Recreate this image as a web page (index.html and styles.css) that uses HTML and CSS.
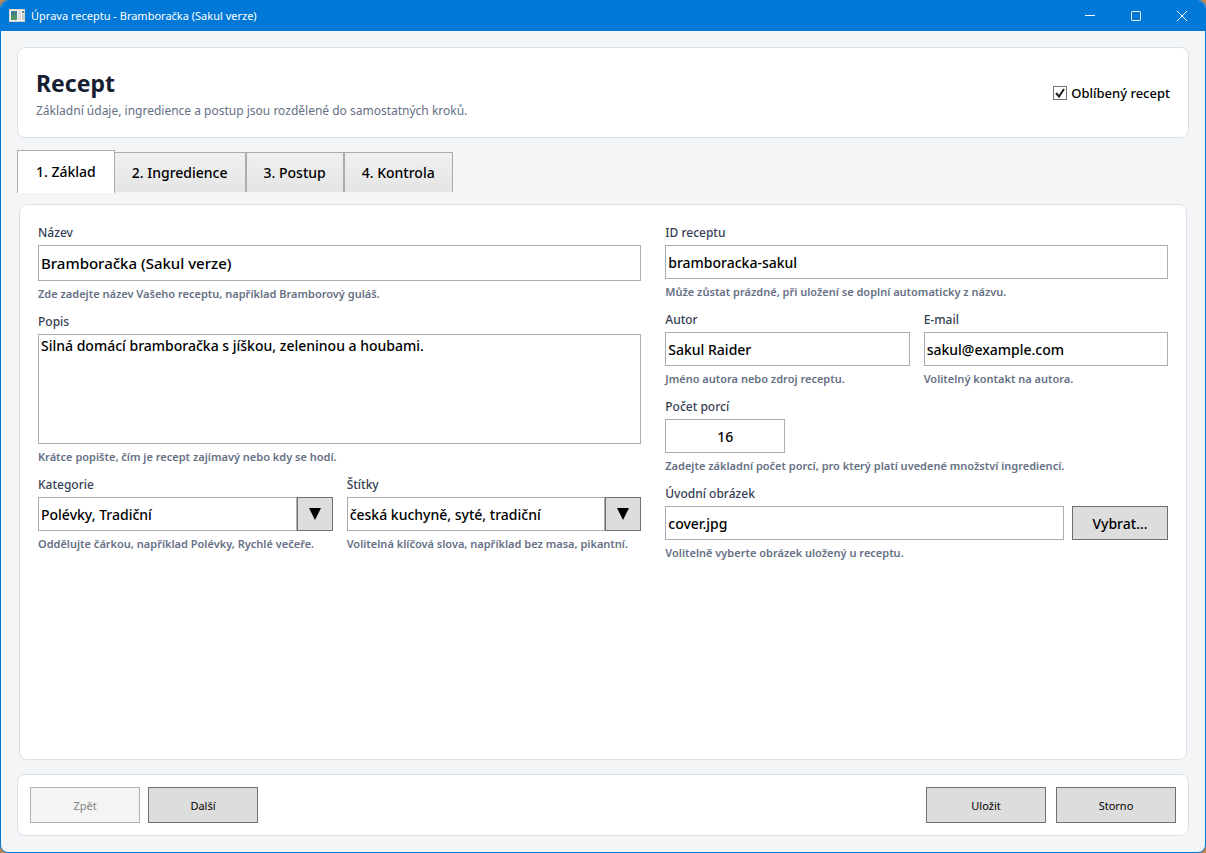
FILE: index.html
```html
<!DOCTYPE html>
<html lang="cs">
<head>
    <meta charset="UTF-8">
    <meta name="viewport" content="width=device-width, initial-scale=1.0">
    <title>Úprava receptu - Bramboračka (Sakul verze)</title>
    <link rel="stylesheet" href="styles.css">
</head>
<body>
    <div class="window">
        <header class="titlebar">
            <svg class="app-icon" width="16" height="14" viewBox="0 0 16 14">
                <rect x="0.5" y="0.5" width="15" height="12" fill="#f4f4f4" stroke="#d6d2cc"/>
                <rect x="2" y="2" width="6" height="9" fill="#3d7f8c"/>
                <rect x="2" y="6" width="6" height="5" fill="#4a9468"/>
                <rect x="9" y="2" width="3" height="9" fill="#dcdcdc"/>
                <rect x="13" y="2" width="2" height="2" fill="#777"/>
                <rect x="13" y="5" width="2" height="6" fill="#c9c9c9"/>
            </svg>
            <span class="caption">Úprava receptu - Bramboračka (Sakul verze)</span>
            <button class="win-btn" aria-label="Minimalizovat">
                <svg width="10" height="10" viewBox="0 0 10 10"><path d="M0 4.5h10"/></svg>
            </button>
            <button class="win-btn" aria-label="Maximalizovat">
                <svg width="10" height="10" viewBox="0 0 10 10"><rect x="0.5" y="0.5" width="9" height="9" rx="1"/></svg>
            </button>
            <button class="win-btn" aria-label="Zavřít">
                <svg width="10" height="10" viewBox="0 0 10 10"><path d="M0 0l10 10M10 0L0 10"/></svg>
            </button>
        </header>

        <main class="content">
            <section class="card heading">
                <div>
                    <h1>Recept</h1>
                    <p class="subtitle">Základní údaje, ingredience a postup jsou rozdělené do samostatných kroků.</p>
                </div>
                <label class="favorite">
                    <input type="checkbox" checked>
                    <span>Oblíbený recept</span>
                </label>
            </section>

            <div class="tabs" role="tablist">
                <button class="tab active" role="tab" aria-selected="true">1. Základ</button>
                <button class="tab" role="tab" aria-selected="false">2. Ingredience</button>
                <button class="tab" role="tab" aria-selected="false">3. Postup</button>
                <button class="tab" role="tab" aria-selected="false">4. Kontrola</button>
            </div>

            <section class="card panel" role="tabpanel">
                <div class="column">
                    <div class="field">
                        <label for="name">Název</label>
                        <input class="large" type="text" id="name" value="Bramboračka (Sakul verze)">
                        <p class="hint">Zde zadejte název Vašeho receptu, například Bramborový guláš.</p>
                    </div>
                    <div class="field">
                        <label for="description">Popis</label>
                        <textarea id="description">Silná domácí bramboračka s jíškou, zeleninou a houbami.</textarea>
                        <p class="hint">Krátce popište, čím je recept zajímavý nebo kdy se hodí.</p>
                    </div>
                    <div class="pair">
                        <div class="field">
                            <label for="category">Kategorie</label>
                            <div class="combo">
                                <input type="text" id="category" value="Polévky, Tradiční">
                                <button class="btn arrow" aria-label="Vybrat kategorie">
                                    <svg width="12" height="12" viewBox="0 0 12 12"><path d="M0 0h12L6 12z"/></svg>
                                </button>
                            </div>
                            <p class="hint">Oddělujte čárkou, například Polévky, Rychlé večeře.</p>
                        </div>
                        <div class="field">
                            <label for="tags">Štítky</label>
                            <div class="combo">
                                <input type="text" id="tags" value="česká kuchyně, syté, tradiční">
                                <button class="btn arrow" aria-label="Vybrat štítky">
                                    <svg width="12" height="12" viewBox="0 0 12 12"><path d="M0 0h12L6 12z"/></svg>
                                </button>
                            </div>
                            <p class="hint">Volitelná klíčová slova, například bez masa, pikantní.</p>
                        </div>
                    </div>
                </div>

                <div class="column">
                    <div class="field">
                        <label for="recipeId">ID receptu</label>
                        <input type="text" id="recipeId" value="bramboracka-sakul">
                        <p class="hint">Může zůstat prázdné, při uložení se doplní automaticky z názvu.</p>
                    </div>
                    <div class="pair">
                        <div class="field">
                            <label for="author">Autor</label>
                            <input type="text" id="author" value="Sakul Raider">
                            <p class="hint">Jméno autora nebo zdroj receptu.</p>
                        </div>
                        <div class="field">
                            <label for="email">E-mail</label>
                            <input type="text" id="email" value="sakul@example.com">
                            <p class="hint">Volitelný kontakt na autora.</p>
                        </div>
                    </div>
                    <div class="field">
                        <label for="servings">Počet porcí</label>
                        <input class="servings" type="text" id="servings" value="16">
                        <p class="hint">Zadejte základní počet porcí, pro který platí uvedené množství ingrediencí.</p>
                    </div>
                    <div class="field">
                        <label for="cover">Úvodní obrázek</label>
                        <div class="picker">
                            <input type="text" id="cover" value="cover.jpg">
                            <button class="btn browse">Vybrat...</button>
                        </div>
                        <p class="hint">Volitelně vyberte obrázek uložený u receptu.</p>
                    </div>
                </div>
            </section>

            <footer class="card actions">
                <div class="nav">
                    <button class="btn" disabled>Zpět</button>
                    <button class="btn">Další</button>
                </div>
                <div class="confirm">
                    <button class="btn">Uložit</button>
                    <button class="btn">Storno</button>
                </div>
            </footer>
        </main>
    </div>
</body>
</html>
```
FILE: styles.css
```css
* {
    box-sizing: border-box;
}
body {
    margin: 0;
    background: #b98555;
    color: #000;
    font-family: "Noto Sans", "Open Sans", sans-serif;
    font-size: 14px;
    font-weight: 500;
}
h1, p {
    margin: 0;
}
button, input, textarea {
    font: inherit;
    color: inherit;
    margin: 0;
    border-radius: 0;
}

/* Window */
.window {
    display: flex;
    flex-direction: column;
    min-height: 100vh;
    border: 1px solid #0078d7;
    border-radius: 8px;
    overflow: hidden;
    background: #f4f5f7;
}
.titlebar {
    display: flex;
    align-items: center;
    height: 30px;
    padding-left: 8px;
    background: #0078d7;
    color: #fff;
    font-size: 11px;
    font-weight: 400;
}
.caption {
    flex: 1;
    margin-left: 6px;
    padding-bottom: 2px;
}
.win-btn {
    display: flex;
    align-items: center;
    justify-content: center;
    width: 46px;
    height: 28px;
    padding: 0;
    border: 0;
    background: none;
}
.win-btn svg {
    fill: none;
    stroke: #fff;
}
.content {
    flex: 1;
    display: flex;
    flex-direction: column;
    padding: 16px;
}
.card {
    background: #fff;
    border: 1px solid #dbe1e8;
    border-radius: 8px;
}

/* Heading */
.heading {
    display: flex;
    align-items: center;
    justify-content: space-between;
    padding: 18px;
}
h1 {
    margin-bottom: 2px;
    font-size: 23px;
    font-weight: 700;
    line-height: 34px;
    color: #172033;
}
.subtitle {
    font-size: 12px;
    font-weight: 400;
    line-height: 17px;
    color: #667085;
}
.favorite {
    display: flex;
    align-items: center;
    gap: 4px;
    font-size: 13px;
}
.favorite input {
    appearance: none;
    width: 14px;
    height: 14px;
    border: 1px solid #707070;
    background: #fff url("data:image/svg+xml,%3Csvg xmlns='http://www.w3.org/2000/svg' viewBox='0 0 12 12'%3E%3Cpath d='M2 6l3 3.5L10 2' fill='none' stroke='%23212121' stroke-width='2'/%3E%3C/svg%3E");
}

/* Tabs */
.tabs {
    display: flex;
    align-items: flex-end;
    margin: 12px 0;
}
.tab {
    height: 40px;
    padding: 0 17px;
    border: 1px solid #acacac;
    border-bottom: 0;
    background: linear-gradient(#f0f0f0, #e5e5e5);
}
.tab.active {
    height: 43px;
    margin-bottom: -1px;
    padding: 0 18px 2px;
    background: #fff;
}
.tab.active + .tab {
    border-left: 0;
}

/* Form */
.panel {
    flex: 1;
    display: grid;
    grid-template-columns: 6fr 5fr;
    gap: 24px;
    margin: 0 2px 14px;
    padding: 18px;
}
.column {
    display: flex;
    flex-direction: column;
    gap: 10px;
    min-width: 0;
}
.pair {
    display: grid;
    grid-template-columns: 1fr 1fr;
    gap: 14px;
}
.field {
    display: flex;
    flex-direction: column;
    min-width: 0;
}
.field label {
    margin-bottom: 2px;
    font-size: 12px;
    line-height: 20px;
    color: #344054;
}
.field input, .field textarea {
    width: 100%;
    height: 34px;
    padding: 0 2px;
    border: 1px solid #abadb3;
    background: #fff;
    outline: none;
}
.field input.large {
    height: 36px;
    font-size: 15px;
}
.field textarea {
    height: 110px;
    line-height: 22px;
    resize: none;
    display: block;
}
.field input.servings {
    width: 120px;
    text-align: center;
}
.hint {
    margin-top: 5px;
    font-size: 11px;
    font-weight: 600;
    line-height: 16px;
    color: #667085;
    white-space: nowrap;
}
.combo, .picker {
    display: flex;
}
.picker {
    gap: 8px;
}

/* Buttons */
.btn {
    padding: 0;
    border: 1px solid #707070;
    background: #ddd;
}
.btn:disabled {
    border-color: #adb2b5;
    background: #f4f4f4;
    color: #838383;
}
.arrow {
    flex: none;
    width: 36px;
}
.browse {
    flex: none;
    width: 96px;
}
.actions {
    display: flex;
    justify-content: space-between;
    padding: 12px;
}
.actions .btn {
    height: 36px;
    font-size: 11px;
    font-weight: 400;
}
.nav, .confirm {
    display: flex;
}
.nav {
    gap: 8px;
}
.nav .btn {
    width: 110px;
}
.confirm {
    gap: 10px;
}
.confirm .btn {
    width: 120px;
}
```
